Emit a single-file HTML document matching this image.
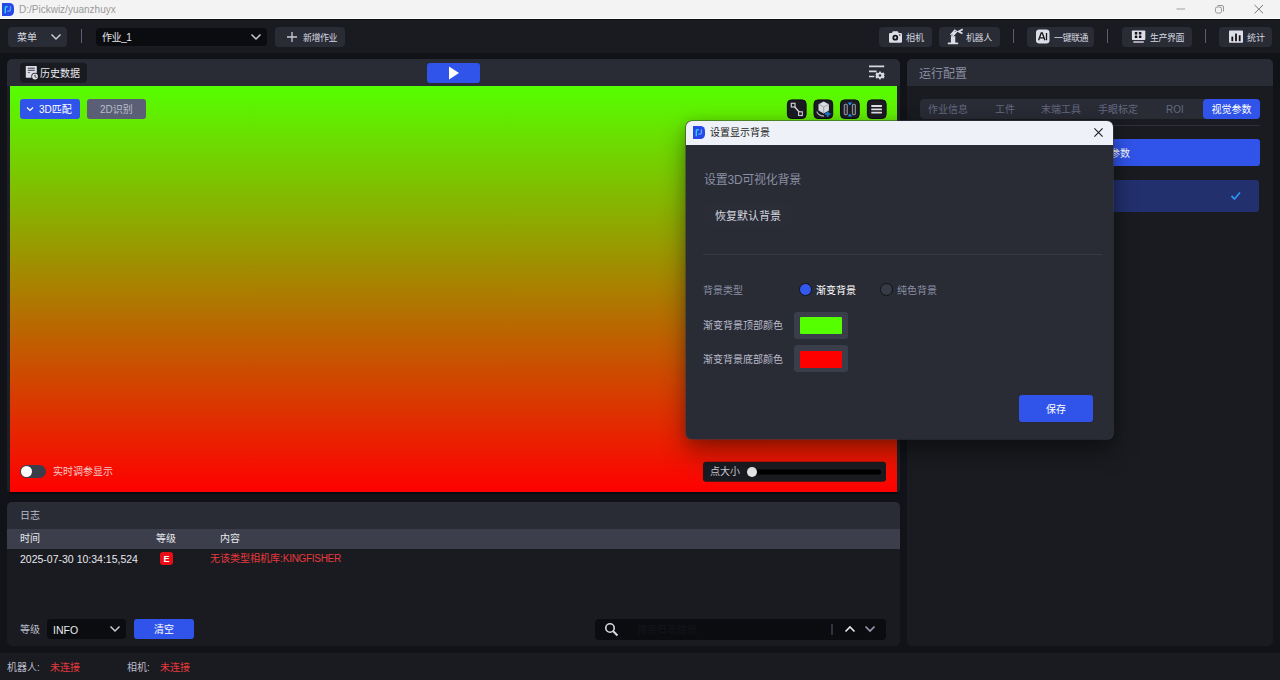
<!DOCTYPE html>
<html lang="zh-CN">
<head>
<meta charset="utf-8">
<title>D:/Pickwiz/yuanzhuyx</title>
<style>
*{box-sizing:border-box;margin:0;padding:0}
html,body{width:1280px;height:680px;overflow:hidden;background:#121318}
body{position:relative;font-family:"Liberation Sans","Noto Sans CJK SC",sans-serif;font-size:10px;color:#d6d8e0;line-height:1}
.abs{position:absolute}
.t{position:absolute;white-space:nowrap;line-height:14px;height:14px;margin-top:1px}
#titlebar{left:0;top:0;width:1280px;height:19px;background:#f3f3f3;border-bottom:1px solid #fff}
#toolbar{left:0;top:19px;width:1280px;height:34px;background:#1a1b20;border-top:1px solid #0c0d10}
.btn{position:absolute;background:#292b35;border-radius:4px}
.panel{position:absolute;background:#1a1b20;border-radius:5px;overflow:hidden}
.phead{position:absolute;left:0;top:0;right:0;background:#292b35}
.vsep{position:absolute;width:1px;background:#5a5e70}
.tb{position:absolute;top:99px;width:20px;height:20px;background:#1b1c22;border:1px solid #0e0a1e;border-radius:4.500px}
#statusbar{left:0;top:653px;width:1280px;height:27px;background:#1a1b20}
</style>
</head>
<body>
<!-- window title bar -->
<div id="titlebar" class="abs"></div>
<svg class="abs" style="left:2px;top:3px" width="12" height="13" viewBox="0 0 12 13"><path d="M0 0h7.500a4.500 4.500 0 0 1 4.500 4.500v4a4.500 4.500 0 0 1-4.500 4.500H0z" fill="#2748e8"/><path d="M3.300 10.300V4.800a1 1 0 0 1 1-1h1.400" fill="none" stroke="#30d0f8" stroke-width="1.400"/><path d="M8.400 3.200v3.600a1.300 1.300 0 0 1-1.300 1.300H5.300" fill="none" stroke="#5aa4f5" stroke-width="1.400"/></svg>
<div class="t" style="left:19px;top:2px;font-size:10px;color:#9a9a9a">D:/Pickwiz/yuanzhuyx</div>
<svg class="abs" style="left:1170px;top:0" width="110" height="19" viewBox="0 0 110 19"><path d="M6.500 9h8.500" stroke="#b4b4b4" stroke-width="1.300"/><rect x="45.500" y="7" width="6" height="6" rx="1.500" fill="none" stroke="#9a9a9a"/><path d="M47.500 5.500h4.500a1.500 1.500 0 0 1 1.500 1.500v4.500" fill="none" stroke="#9a9a9a"/><path d="M84.600 5l8.400 8.300M93 5l-8.400 8.300" stroke="#6a6a6a" stroke-width="0.900"/></svg>

<!-- toolbar -->
<div id="toolbar" class="abs"></div>
<div class="btn" style="left:8px;top:27px;width:59px;height:20px"></div>
<div class="t" style="left:17px;top:30px">菜单</div>
<svg class="abs" style="left:50px;top:32px" width="12" height="10" viewBox="0 0 12 10"><path d="M1.500 2.500l4.500 4.500 4.500-4.500" fill="none" stroke="#c8cad4" stroke-width="1.500"/></svg>
<div class="vsep" style="left:81px;top:29px;height:14px"></div>
<div class="abs" style="left:96px;top:28px;width:171px;height:18px;background:#0b0c10;border-radius:4px"></div>
<div class="t" style="left:102px;top:30px;color:#e6e7ec;letter-spacing:-0.400px">作业_1</div>
<svg class="abs" style="left:250px;top:32px" width="12" height="10" viewBox="0 0 12 10"><path d="M1.500 2.500l4.500 4.500 4.500-4.500" fill="none" stroke="#c8cad4" stroke-width="1.500"/></svg>
<div class="btn" style="left:275px;top:27px;width:70px;height:20px"></div>
<svg class="abs" style="left:286px;top:31px" width="12" height="12" viewBox="0 0 12 12"><path d="M6 1v10M1 6h10" stroke="#c8cad4" stroke-width="1.300"/></svg>
<div class="t" style="left:303px;top:30px;font-size:9px;letter-spacing:-0.500px">新增作业</div>

<div class="btn" style="left:879px;top:27px;width:53px;height:20px"></div>
<div class="t" style="left:906px;top:30px;font-size:9px">相机</div>
<div class="btn" style="left:939px;top:27px;width:61px;height:20px"></div>
<div class="t" style="left:966px;top:30px;font-size:9px;letter-spacing:-0.400px">机器人</div>
<div class="vsep" style="left:1013px;top:29px;height:14px"></div>
<div class="btn" style="left:1027px;top:27px;width:67px;height:20px"></div>
<div class="t" style="left:1054px;top:30px;font-size:9px;letter-spacing:-0.500px">一键联通</div>
<div class="vsep" style="left:1107px;top:29px;height:14px"></div>
<div class="btn" style="left:1122px;top:27px;width:70px;height:20px"></div>
<div class="t" style="left:1150px;top:30px;font-size:9px;letter-spacing:-0.500px">生产界面</div>
<div class="vsep" style="left:1205px;top:29px;height:14px"></div>
<div class="btn" style="left:1219px;top:27px;width:53px;height:20px"></div>
<div class="t" style="left:1247px;top:30px;font-size:9px">统计</div>

<!-- left 3D view panel -->
<div class="panel" style="left:7px;top:59px;width:893px;height:435px;background:#0a0b0e">
  <div class="phead" style="height:27px"></div>
  <div class="abs" style="left:0;top:27px;width:3px;height:406px;background:#1e2027"></div>
  <div class="abs" style="left:890px;top:27px;width:3px;height:406px;background:#1e2027"></div>
  <div class="abs" id="grad" style="left:3px;top:27px;width:887px;height:406px;background:linear-gradient(#55ff00,#ff0000)"></div>
</div>
<div class="abs" style="left:20px;top:63px;width:67px;height:20px;background:#1a1b20;border-radius:4px;transform:translateY(-0.300px)"></div>
<div class="t" style="left:40px;top:66px;color:#e8e9ee">历史数据</div>
<div class="abs" style="left:427px;top:63px;width:53px;height:20px;background:#3054ea;border-radius:3px"></div>
<svg class="abs" style="left:448px;top:66px" width="12" height="14" viewBox="0 0 12 14"><path d="M1 0.500l10 6.500-10 6.500z" fill="#fff"/></svg>

<div class="abs" style="left:20px;top:99px;width:60px;height:20px;background:#3054ea;border-radius:3px"></div>
<svg class="abs" style="left:26px;top:106px" width="8" height="6" viewBox="0 0 8 6"><path d="M1 1.500l3 3 3-3" fill="none" stroke="#fff" stroke-width="1.200"/></svg>
<div class="t" style="left:39px;top:102px;color:#fff">3D匹配</div>
<div class="abs" style="left:87px;top:99px;width:59px;height:20px;background:#5b5f75;border-radius:3px"></div>
<div class="t" style="left:100px;top:102px;color:#b9bccb">2D识别</div>


<!-- toolbar icons -->
<svg class="abs" style="left:888px;top:30px" width="15" height="14" viewBox="0 0 15 14"><path d="M2.200 3h1.700l1-1.700h4.800l1 1.700h2.100a1.200 1.200 0 0 1 1.200 1.200v7.300a1.200 1.200 0 0 1-1.200 1.200H2.200A1.200 1.200 0 0 1 1 11.500V4.200A1.200 1.200 0 0 1 2.200 3z" fill="#dcdde6"/><circle cx="7.300" cy="7.700" r="2.900" fill="#15161b"/><circle cx="7.300" cy="7.700" r="1.100" fill="#dcdde6"/><circle cx="11.800" cy="5" r="0.700" fill="#15161b"/></svg>
<svg class="abs" style="left:947px;top:28px" width="17" height="17" viewBox="0 0 17 17"><path d="M0.800 15.400h10.400" stroke="#dcdde6" stroke-width="1.700"/><path d="M3.900 15V8.200h4.400V15z" fill="#dcdde6"/><path d="M7.700 1.300L3 6.600l2.800 2.500 5-5.600z" fill="#dcdde6"/><circle cx="5" cy="7" r="0.700" fill="#7a7d8a"/><circle cx="8.300" cy="3.400" r="0.700" fill="#7a7d8a"/><path d="M15.800 1.300l-4.300 2.200 4 2.100" fill="none" stroke="#dcdde6" stroke-width="1.700"/></svg>
<svg class="abs" style="left:1036px;top:29px" width="14" height="15" viewBox="0 0 14 15"><rect x="0" y="0.500" width="13.500" height="14" rx="3.300" fill="#dcdde6"/><path d="M2.600 11.200L5.200 4h1.100l2.600 7.200M3.600 8.800h4.300M10.500 4v7.200" fill="none" stroke="#17181d" stroke-width="1.300"/></svg>
<svg class="abs" style="left:1131px;top:30px" width="15" height="14" viewBox="0 0 15 14"><rect x="0.900" y="0.500" width="13.400" height="9.600" rx="0.800" fill="#dcdde6"/><rect x="3.800" y="2" width="2.500" height="2.500" rx="0.500" fill="#101116"/><rect x="7.900" y="2" width="2.500" height="2.500" rx="0.500" fill="#101116"/><rect x="3.800" y="5.600" width="2.500" height="2.500" rx="0.500" fill="#101116"/><rect x="7.900" y="5.600" width="2.500" height="2.500" rx="0.500" fill="#101116"/><rect x="2.300" y="11.300" width="10.500" height="1.400" fill="#dcdde6"/></svg>
<svg class="abs" style="left:1229px;top:30px" width="15" height="14" viewBox="0 0 15 14"><rect x="0" y="0.500" width="14" height="12.300" rx="0.800" fill="#dcdde6"/><rect x="2.400" y="6.600" width="1.800" height="4.600" fill="#101116"/><rect x="6.100" y="3.600" width="1.800" height="7.600" fill="#101116"/><rect x="9.800" y="5.300" width="1.800" height="5.900" fill="#101116"/></svg>
<!-- history icon -->
<svg class="abs" style="left:25px;top:65px" width="15" height="15" viewBox="0 0 15 15"><rect x="0.800" y="1" width="11" height="11.800" rx="0.600" fill="#dcdde6"/><path d="M2.800 3.200h7M2.800 5.300h7" stroke="#3a3c48" stroke-width="1"/><path d="M2.800 7.600h2.400" stroke="#6a6d7a" stroke-width="1"/><circle cx="10" cy="11.500" r="3.700" fill="#1a1b20"/><circle cx="10" cy="11.500" r="2.900" fill="#dcdde6"/><path d="M10 9.700v1.900l1.500 0.900" fill="none" stroke="#1a1b20" stroke-width="0.900"/></svg>
<!-- settings list icon -->
<svg class="abs" style="left:868px;top:64px" width="18" height="18" viewBox="0 0 18 18"><path d="M1 2.300h15.200M1 7.300h7.600M1 12.500h5.300" stroke="#d6d7e0" stroke-width="1.700"/><path d="M12 7.100l1.500 1.800 2.300-0.400 0.800 2.200-0.800 0.800 0.800 0.800-0.800 2.200-2.300-0.400-1.500 1.800-1.500-1.800-2.300 0.400-0.800-2.200 0.800-0.800-0.800-0.800 0.800-2.200 2.300 0.400z" fill="#d6d7e0"/><circle cx="12" cy="11.500" r="1.200" fill="#292b35"/></svg>
<!-- view tool buttons -->
<svg class="abs" style="left:780px;top:95px" width="112" height="28" viewBox="780 95 112 28"><g fill="#1b1c22" stroke="#0e0a1e" stroke-width="1"><rect x="787.400" y="99.900" width="18.700" height="18.600" rx="4"/><rect x="814" y="99.900" width="18.700" height="18.600" rx="4"/><rect x="840.500" y="99.900" width="18.700" height="18.600" rx="4"/><rect x="867.400" y="99.900" width="18.700" height="18.600" rx="4"/></g></svg>
<svg class="abs" style="left:787px;top:99px" width="20" height="20" viewBox="0 0 20 20"><path d="M6.500 6.500l7 8" stroke="#d6d7e0" stroke-width="1.400"/><rect x="4.300" y="4.300" width="3.700" height="3.700" fill="#1b1c22" stroke="#d6d7e0" stroke-width="1.100"/><rect x="11.600" y="12.800" width="3.700" height="3.700" fill="#1b1c22" stroke="#d6d7e0" stroke-width="1.100"/></svg>
<svg class="abs" style="left:814px;top:99px" width="20" height="20" viewBox="0 0 20 20"><path d="M3 12.500c0 2 2.800 4.200 7 4.600" fill="none" stroke="#b9bac4" stroke-width="1.200"/><path d="M9.700 2.500l5.200 2.700v6.400l-5.200 2.900-5.200-2.900V5.200z" fill="#d9dae2"/><path d="M4.500 5.200l5.200 2.800 5.200-2.800M9.700 8v6.400" fill="none" stroke="#8b8d99" stroke-width="0.700"/><path d="M13.700 12.200l0.800 2.000 2.000 0.800-2.000 0.800-0.800 2.000-0.800-2.000-2.000-0.800 2.000-0.800z" fill="#1e7fe0" stroke="#1e7fe0" stroke-width="0.800"/></svg>
<svg class="abs" style="left:840px;top:99px" width="20" height="20" viewBox="0 0 20 20"><rect x="4.300" y="5.300" width="3" height="10.300" rx="1" fill="#2b2d36" stroke="#8f909c" stroke-width="1.100"/><rect x="12.400" y="5.300" width="3" height="10.300" rx="1" fill="#2b2d36" stroke="#8f909c" stroke-width="1.100"/><path d="M7.600 3.400h4.600l-2.300 3z" fill="#1f8df5"/><path d="M7.600 17.400h4.600l-2.300-3z" fill="#1f8df5"/></svg>
<svg class="abs" style="left:867px;top:99px" width="20" height="20" viewBox="0 0 20 20"><path d="M4.300 7h10.600M4.300 10.300h10.600M4.300 13.700h10.600" stroke="#dedfe6" stroke-width="1.800"/></svg>

<!-- toggle -->
<div class="abs" style="left:20px;top:465px;width:26px;height:13px;border-radius:7px;background:#3a3d4a"></div>
<div class="abs" style="left:21px;top:466px;width:11px;height:11px;border-radius:6px;background:#fff"></div>
<div class="t" style="left:53px;top:464px;color:#f2c9c9">实时调参显示</div>

<!-- point size slider -->
<div class="abs" style="left:703px;top:462px;width:183px;height:20px;transform:translateY(-0.300px);background:#1a1b20;border-radius:3px"></div>
<div class="t" style="left:710px;top:464px;color:#c9cbd6">点大小</div>
<div class="abs" style="left:750px;top:469px;width:131px;height:5px;border-radius:2.500px;background:#000;transform:translateY(0.500px)"></div>
<div class="abs" style="left:747px;top:467px;width:10px;height:10px;border-radius:5px;background:#e6e6e6"></div>

<!-- log panel -->
<div class="panel" style="left:7px;top:502px;width:893px;height:144px">
  <div class="phead" style="height:27px"></div>
  <div class="abs" style="left:0;top:27px;width:893px;height:20px;background:#3c3f4b"></div>
</div>
<div class="t" style="left:20px;top:508px;color:#b9bccb">日志</div>
<div class="t" style="left:20px;top:531px;color:#e8e9ee">时间</div>
<div class="t" style="left:156px;top:531px;color:#e8e9ee">等级</div>
<div class="t" style="left:220px;top:531px;color:#e8e9ee">内容</div>
<div class="t" style="left:20px;top:551px;color:#e8e9ee;font-size:10.500px">2025-07-30 10:34:15,524</div>
<div class="abs" style="left:160px;top:552px;width:13px;height:13px;background:#ea0c16;border-radius:3px"></div>
<div class="t" style="left:160px;top:552px;width:13px;text-align:center;color:#fff;font-weight:bold;font-size:9px;line-height:13px;height:13px">E</div>
<div class="t" style="left:210px;top:551px;color:#e5393c">无该类型相机库:<span style="letter-spacing:-0.300px">KINGFISHER</span></div>
<div class="t" style="left:20px;top:622px;color:#b9bccb">等级</div>
<div class="abs" style="left:47px;top:619px;width:79px;height:20px;background:#0b0c10;border-radius:4px"></div>
<div class="t" style="left:53px;top:622px;color:#e8e9ee;font-size:10.500px">INFO</div>
<svg class="abs" style="left:109px;top:624px" width="12" height="10" viewBox="0 0 12 10"><path d="M1.500 2.500l4.500 4.500 4.500-4.500" fill="none" stroke="#c8cad4" stroke-width="1.500"/></svg>
<div class="abs" style="left:134px;top:619px;width:60px;height:20px;background:#3054ea;border-radius:3px"></div>
<div class="t" style="left:134px;top:622px;width:60px;text-align:center;color:#fff">清空</div>
<div class="abs" style="left:595px;top:619px;width:291px;height:21px;background:#0b0c10;border-radius:4px"></div>
<svg class="abs" style="left:604px;top:622px" width="16" height="16" viewBox="0 0 16 16"><circle cx="6" cy="6" r="4.200" fill="none" stroke="#d6d8e0" stroke-width="1.600"/><path d="M9.200 9.200l4.300 4.300" stroke="#d6d8e0" stroke-width="2"/></svg>
<div class="t" style="left:637px;top:622px;color:#14151a">搜索日志信息</div>
<div class="abs" style="left:831px;top:624px;width:2px;height:11px;background:#30333d"></div>
<svg class="abs" style="left:844px;top:624px" width="12" height="10" viewBox="0 0 12 10"><path d="M1.500 7.500l4.500-4.500 4.500 4.500" fill="none" stroke="#e6e7ec" stroke-width="1.600"/></svg>
<svg class="abs" style="left:864px;top:624px" width="12" height="10" viewBox="0 0 12 10"><path d="M1.500 2.500l4.500 4.500 4.500-4.500" fill="none" stroke="#9a9db0" stroke-width="1.600"/></svg>

<!-- right panel -->
<div class="panel" style="left:907px;top:59px;width:366px;height:587px">
  <div class="phead" style="height:27px"></div>
</div>
<div class="t" style="left:919px;top:66px;font-size:12px;color:#8a8fa3">运行配置</div>
<div class="abs" style="left:920px;top:99px;width:340px;height:20px;background:#292b35;border-radius:4px"></div>
<div class="t" style="left:928px;top:102px;color:#646980">作业信息</div>
<div class="t" style="left:995px;top:102px;color:#646980">工件</div>
<div class="t" style="left:1041px;top:102px;color:#646980">末端工具</div>
<div class="t" style="left:1098px;top:102px;color:#646980">手眼标定</div>
<div class="t" style="left:1166px;top:102px;color:#646980">ROI</div>
<div class="abs" style="left:1203px;top:99px;width:57px;height:20px;background:#3054ea;border-radius:4px"></div>
<div class="t" style="left:1203px;top:102px;width:57px;text-align:center;color:#fff">视觉参数</div>
<div class="abs" style="left:920px;top:125px;width:340px;height:1px;background:#2d2f3a"></div>
<div class="abs" style="left:920px;top:139px;width:340px;height:27px;background:#3054ea;border-radius:3px"></div>
<div class="t" style="left:1050px;top:146px;width:80px;text-align:right;color:#fff">新增视觉参数</div>
<div class="abs" style="left:920px;top:180px;width:339px;height:32px;background:#22306e;border-radius:3px"></div>
<svg class="abs" style="left:1230px;top:191px" width="12" height="10" viewBox="0 0 12 10"><path d="M1.500 5l3 3 5.500-6.500" fill="none" stroke="#2f8ff0" stroke-width="1.800"/></svg>

<!-- status bar -->
<div id="statusbar" class="abs"></div>
<div class="t" style="left:7px;top:660px;color:#b9bccb">机器人:</div>
<div class="t" style="left:50px;top:660px;color:#e5393c">未连接</div>
<div class="t" style="left:127px;top:660px;color:#b9bccb">相机:</div>
<div class="t" style="left:160px;top:660px;color:#e5393c">未连接</div>

<!-- dialog -->
<div class="abs" id="dlg" style="left:686px;top:121px;width:427px;height:318px;background:#292b35;border-radius:6px;overflow:hidden;box-shadow:0 0 0 .6px #3b3d48,0 12px 26px 0 rgba(0,0,0,.40),0 1px 12px 0 rgba(0,0,0,.15)">
  <div class="abs" style="left:0;top:0;width:427px;height:24px;background:#eef2f8"></div>
</div>
<svg class="abs" style="left:693px;top:126px" width="12" height="13" viewBox="0 0 12 13"><path d="M0 0h7.500a4.500 4.500 0 0 1 4.500 4.500v4a4.500 4.500 0 0 1-4.500 4.500H0z" fill="#2748e8"/><path d="M3.300 10.300V4.800a1 1 0 0 1 1-1h1.400" fill="none" stroke="#30d0f8" stroke-width="1.400"/><path d="M8.400 3.200v3.600a1.300 1.300 0 0 1-1.300 1.300H5.300" fill="none" stroke="#5aa4f5" stroke-width="1.400"/></svg>
<div class="t" style="left:710px;top:125px;color:#222">设置显示背景</div>
<svg class="abs" style="left:1093px;top:127px" width="11" height="11" viewBox="0 0 11 11"><path d="M1.400 1.400l8.200 8.200M9.600 1.400l-8.200 8.200" stroke="#1c1c1c" stroke-width="1.100"/></svg>
<div class="t" style="left:704px;top:172px;font-size:12px;letter-spacing:-0.250px;color:#8a8fa3">设置3D可视化背景</div>
<div class="abs" style="left:705px;top:203px;width:86px;height:24px;background:#2a2c36;border-radius:3px"></div>
<div class="t" style="left:715px;top:208px;font-size:11px;color:#d6d8e0">恢复默认背景</div>
<div class="abs" style="left:703px;top:254px;width:399px;height:1px;background:#363946"></div>
<div class="t" style="left:703px;top:283px;color:#8a8fa3">背景类型</div>
<div class="abs" style="left:799px;top:283px;width:13px;height:13px;border-radius:7px;background:#3358f0;border:1.500px solid #111216"></div>
<div class="t" style="left:816px;top:283px;color:#fff">渐变背景</div>
<div class="abs" style="left:880px;top:283px;width:13px;height:13px;border-radius:7px;background:#373a47;border:1.500px solid #111216"></div>
<div class="t" style="left:897px;top:283px;color:#8a8fa3">纯色背景</div>
<div class="t" style="left:703px;top:318px;color:#b9bccb">渐变背景顶部颜色</div>
<div class="abs" style="left:794px;top:312px;width:54px;height:27px;background:#3a3d4a;border-radius:3px"></div>
<div class="abs" style="left:800px;top:317px;width:42px;height:17px;background:#55ff00;border-radius:1px"></div>
<div class="t" style="left:703px;top:352px;color:#b9bccb">渐变背景底部颜色</div>
<div class="abs" style="left:794px;top:345px;width:54px;height:27px;background:#3a3d4a;border-radius:3px"></div>
<div class="abs" style="left:800px;top:351px;width:42px;height:17px;background:#ff0000;border-radius:1px"></div>
<div class="abs" style="left:1019px;top:395px;width:74px;height:27px;background:#3054ea;border-radius:3px"></div>
<div class="t" style="left:1019px;top:402px;width:74px;text-align:center;color:#fff">保存</div>
</body>
</html>
